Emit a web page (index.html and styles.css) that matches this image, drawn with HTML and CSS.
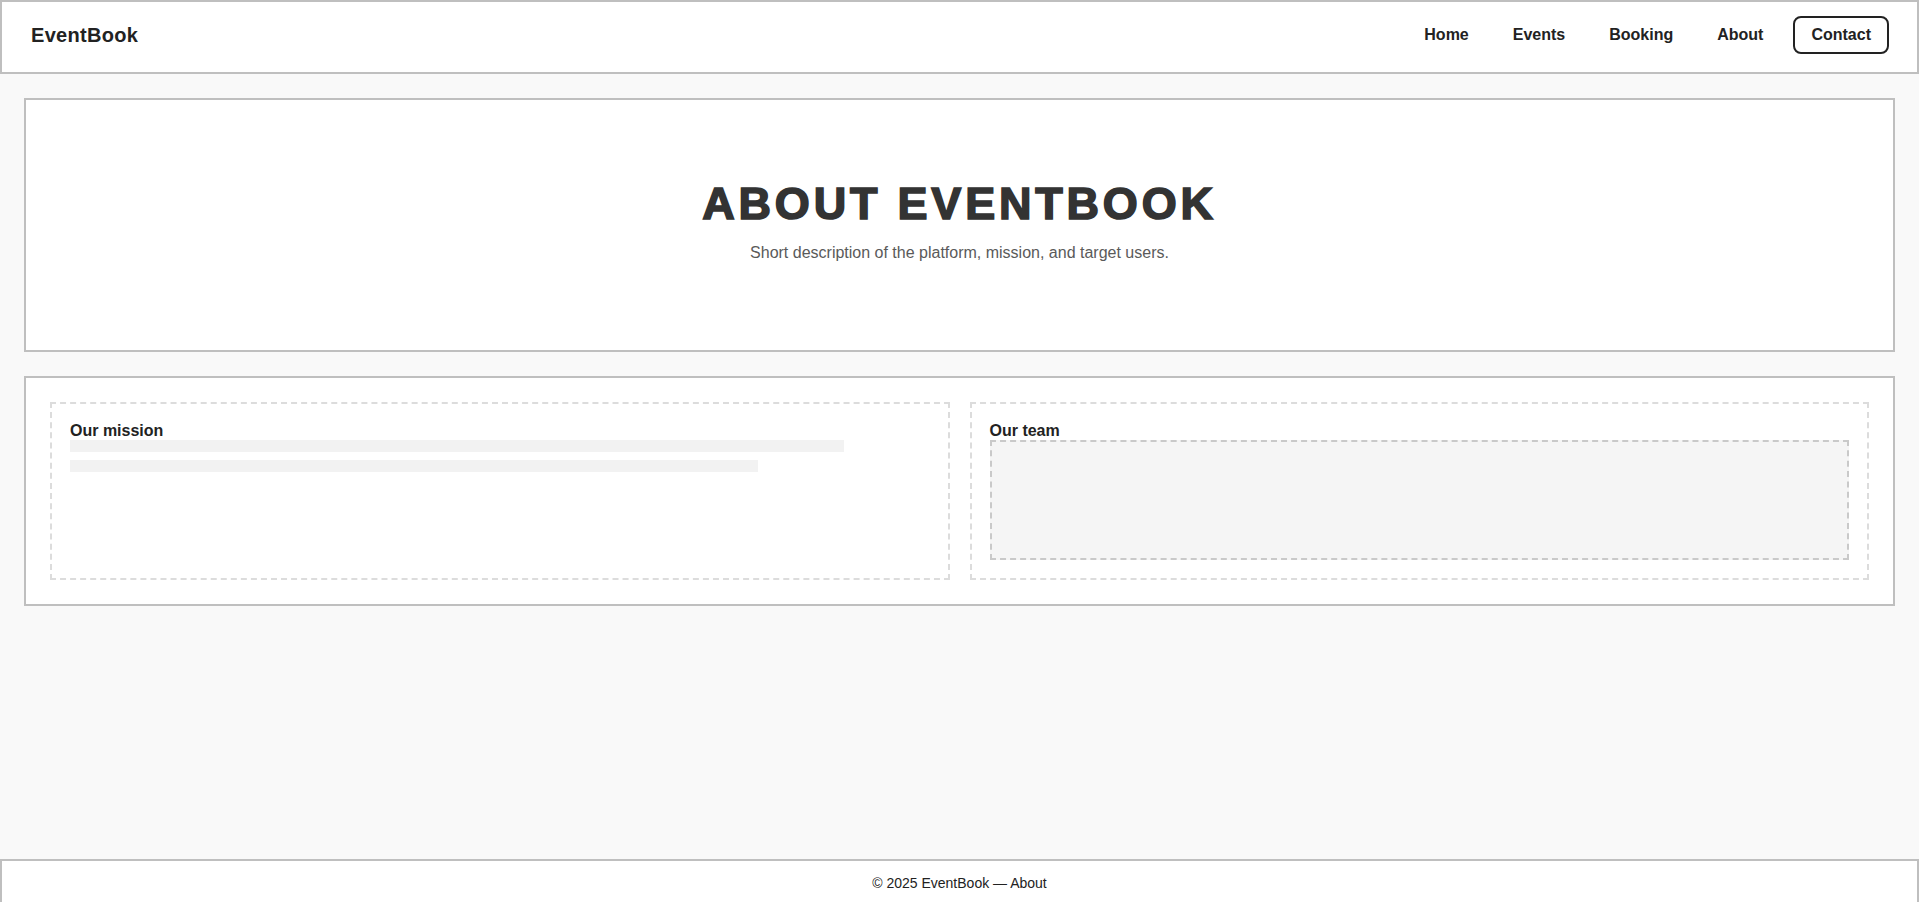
FILE: index.html
```html
<!DOCTYPE html>
<html lang="en">
<head>
<meta charset="utf-8">
<title>About — EventBook</title>
<link rel="stylesheet" href="styles.css">
</head>
<body>
<header class="site-header">
  <div class="logo">EventBook</div>
  <nav class="nav">
    <a class="nav-link" href="#">Home</a>
    <a class="nav-link" href="#">Events</a>
    <a class="nav-link" href="#">Booking</a>
    <a class="nav-link" href="#">About</a>
    <a class="nav-btn" href="#">Contact</a>
  </nav>
</header>
<main class="main">
  <section class="hero">
    <h1 class="hero-title">ABOUT EVENTBOOK</h1>
    <p class="hero-sub">Short description of the platform, mission, and target users.</p>
  </section>
  <section class="panel">
    <div class="card">
      <h3 class="card-title">Our mission</h3>
      <div class="bar bar-90"></div>
      <div class="bar bar-80"></div>
    </div>
    <div class="card">
      <h3 class="card-title">Our team</h3>
      <div class="placeholder"></div>
    </div>
  </section>
</main>
<footer class="site-footer">© 2025 EventBook — About</footer>
</body>
</html>
```
FILE: styles.css
```css
* { box-sizing: border-box; }
html, body { margin: 0; padding: 0; }
body {
  font-family: "Liberation Sans", Arial, sans-serif;
  background: #f9f9f9;
  color: #222;
  min-height: 100vh;
  display: flex;
  flex-direction: column;
}
.site-header {
  background: #fff;
  border: 2px solid #bfbfbf;
  height: 74px;
  padding: 0 28px 0 29px;
  display: flex;
  align-items: center;
  justify-content: space-between;
}
.logo {
  font-size: 20px;
  font-weight: 700;
  letter-spacing: 0.3px;
  color: #222;
  margin-top: -4px;
}
.nav {
  display: flex;
  align-items: center;
  gap: 16px;
  margin-top: -5px;
}
.nav-link {
  color: #222;
  text-decoration: none;
  font-weight: 700;
  font-size: 16px;
  padding: 8px 14px;
}
.nav-btn {
  color: #222;
  text-decoration: none;
  font-weight: 700;
  font-size: 16px;
  padding: 8px 16px;
  border: 2px solid #222;
  border-radius: 8px;
}
.main {
  flex: 1;
  padding: 24px 24px 0;
  display: flex;
  flex-direction: column;
  gap: 24px;
}
.hero {
  background: #fff;
  border: 2px solid #bfbfbf;
  height: 254px;
  padding-top: 78px;
  text-align: center;
}
.hero-title {
  margin: 0;
  font-size: 45px;
  font-weight: 700;
  letter-spacing: 3.8px;
  color: #333;
  -webkit-text-stroke: 1.6px #333;
  line-height: 52px;
}
.hero-sub {
  margin: 14px 0 0;
  font-size: 16px;
  color: #5a5a5a;
}
.panel {
  background: #fff;
  border: 2px solid #bfbfbf;
  padding: 24px;
  display: grid;
  grid-template-columns: 1fr 1fr;
  gap: 20px;
}
.card {
  border: 2px dashed #dcdcdc;
  padding: 18px;
}
.card-title {
  margin: 0;
  font-size: 16px;
  font-weight: 700;
  color: #222;
  line-height: 18px;
}
.bar {
  height: 12px;
  background: #f2f2f2;
  margin-bottom: 8px;
}
.bar-90 { width: 90%; }
.bar-80 { width: 80%; }
.placeholder {
  height: 120px;
  border: 2px dashed #c9c9c9;
  background: #f5f5f5;
}
.site-footer {
  background: #fff;
  border: 2px solid #bfbfbf;
  border-bottom: none;
  height: 43px;
  padding-top: 14px;
  text-align: center;
  font-size: 14px;
  color: #222;
}
```
